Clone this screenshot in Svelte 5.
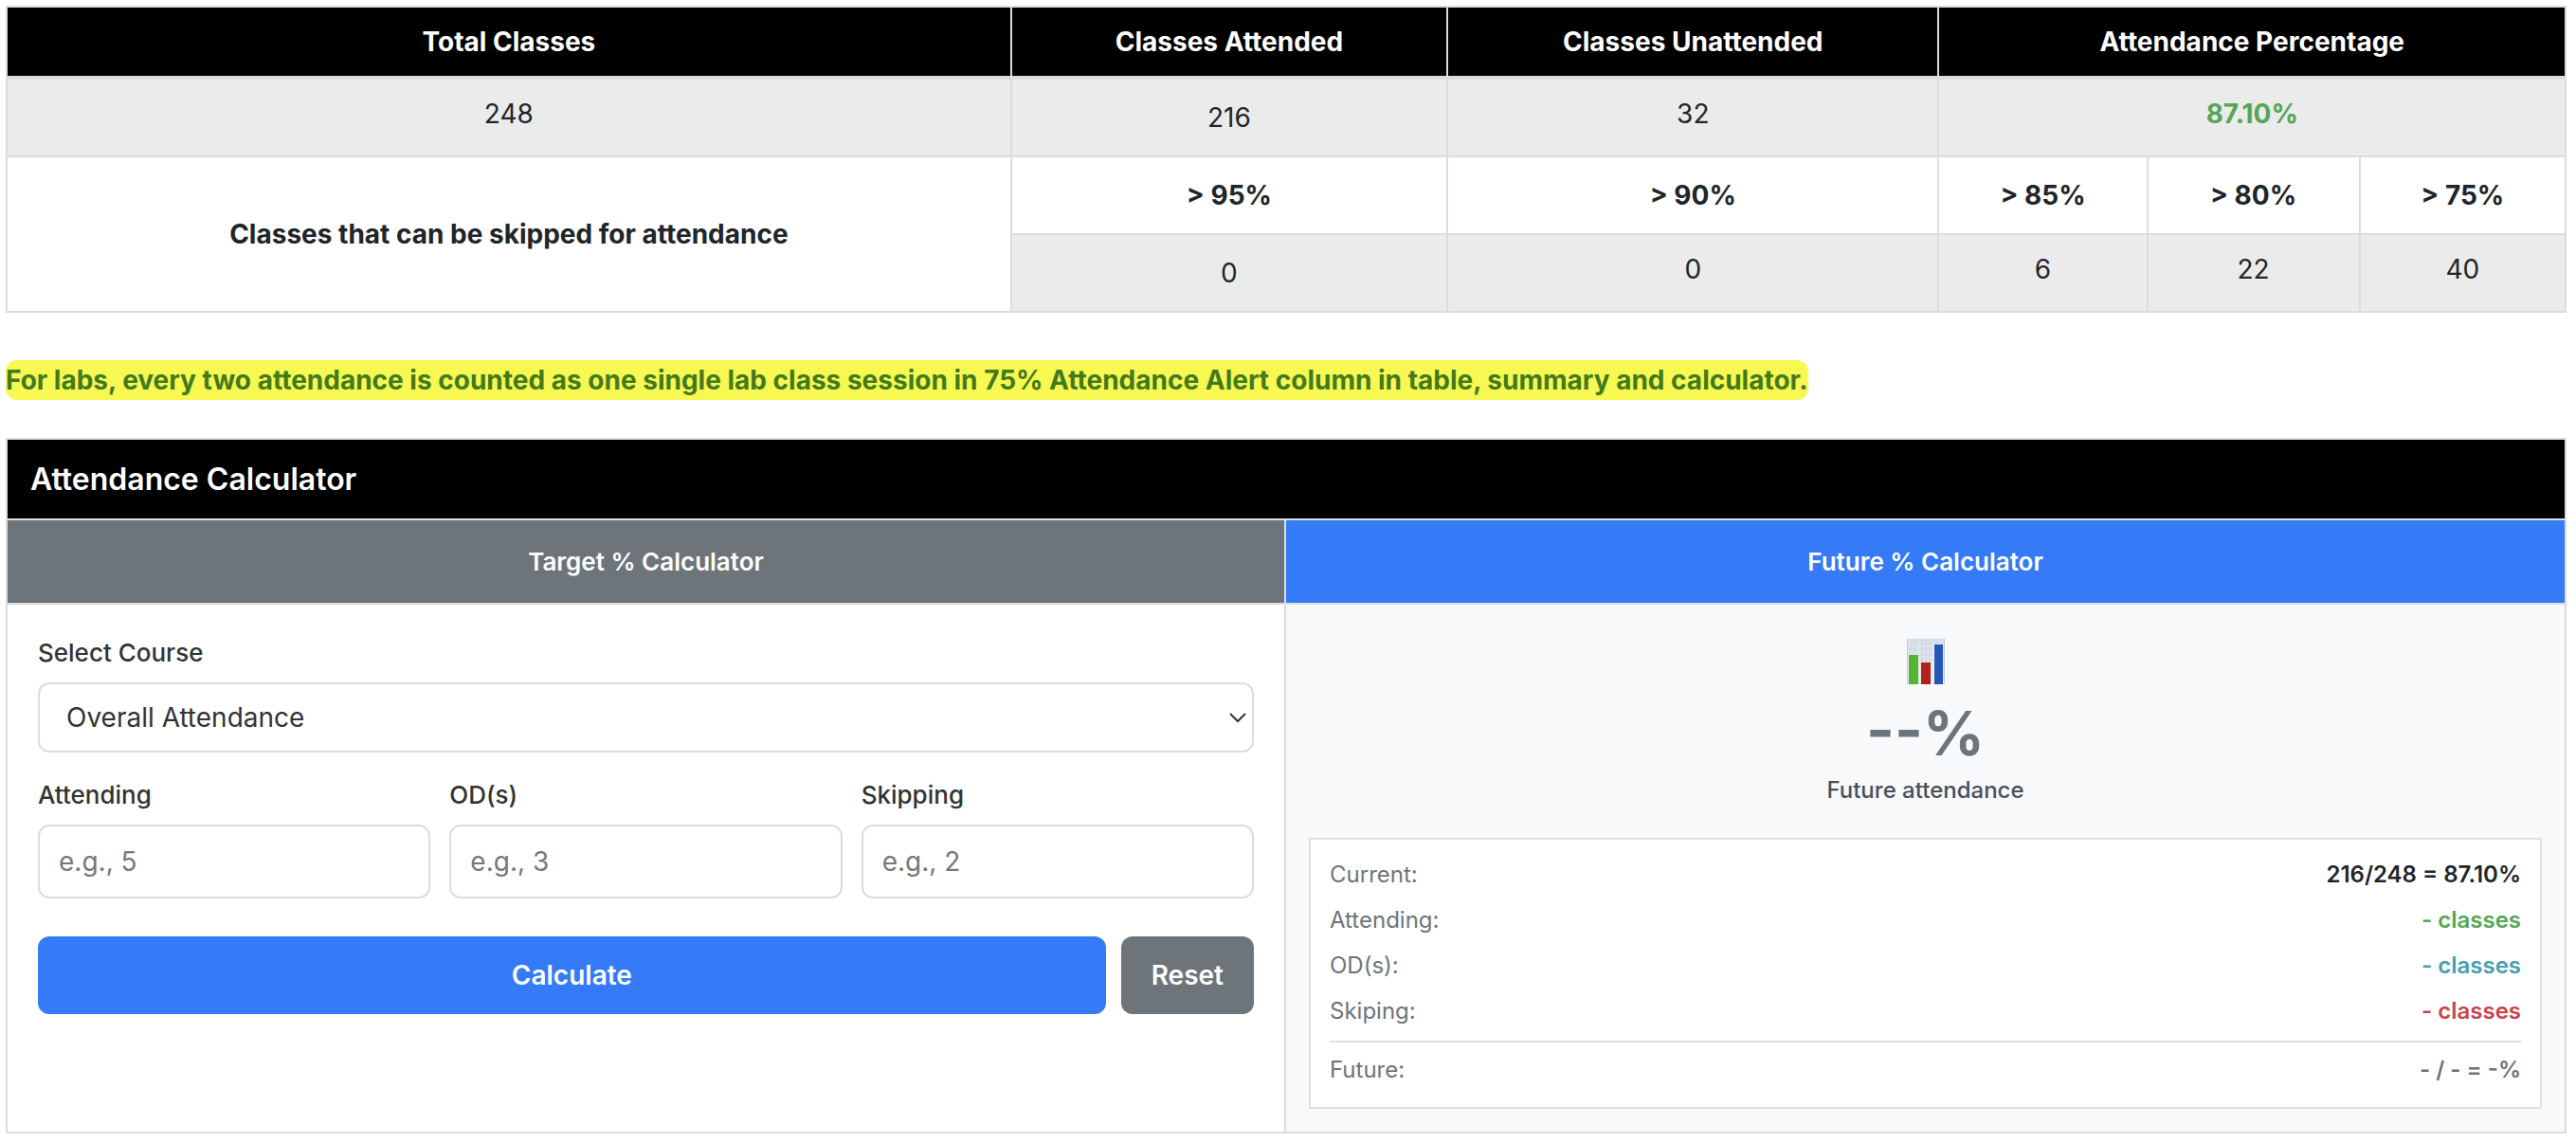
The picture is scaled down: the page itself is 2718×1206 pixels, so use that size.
<script>
  const skipLimits = ['> 95%', '> 90%', '> 85%', '> 80%', '> 75%'];
  const skipCounts = [0, 0, 6, 22, 40];
  const fields = [
    { id: 'attending', label: 'Attending', hint: 'e.g., 5' },
    { id: 'ods', label: 'OD(s)', hint: 'e.g., 3' },
    { id: 'skipping', label: 'Skipping', hint: 'e.g., 2' }
  ];
  const rows = [
    { name: 'Current:', value: '216/248 = 87.10%', tone: 'dark' },
    { name: 'Attending:', value: '- classes', tone: 'green' },
    { name: 'OD(s):', value: '- classes', tone: 'teal' },
    { name: 'Skiping:', value: '- classes', tone: 'red' },
    { name: 'Future:', value: '- / - = -%', tone: 'grey' }
  ];
  let values = $state({ attending: '', ods: '', skipping: '' });

  function reset() {
    values = { attending: '', ods: '', skipping: '' };
  }
</script>

<main>
  <table class="summary">
    <colgroup>
      <col class="c1" /><col class="c2" /><col class="c3" /><col class="c4" /><col class="c5" /><col class="c6" />
    </colgroup>
    <thead>
      <tr>
        <th>Total Classes</th>
        <th>Classes Attended</th>
        <th>Classes Unattended</th>
        <th colspan="3">Attendance Percentage</th>
      </tr>
    </thead>
    <tbody>
      <tr class="shade totals">
        <td>248</td>
        <td class="middle">216</td>
        <td>32</td>
        <td colspan="3" class="percent">87.10%</td>
      </tr>
      <tr>
        <th rowspan="2" scope="rowgroup">Classes that can be skipped for attendance</th>
        {#each skipLimits as limit}
          <th>{limit}</th>
        {/each}
      </tr>
      <tr class="shade">
        {#each skipCounts as count, i}
          <td class:middle={i === 0}>{count}</td>
        {/each}
      </tr>
    </tbody>
  </table>

  <p class="note"><mark>For labs, every two attendance is counted as one single lab class session in 75% Attendance Alert column in table, summary and calculator.</mark></p>

  <section class="calculator">
    <h2>Attendance Calculator</h2>
    <div class="halves tabs">
      <button type="button" class="tab">Target % Calculator</button>
      <button type="button" class="tab active">Future % Calculator</button>
    </div>
    <div class="halves">
      <form onsubmit={(e) => e.preventDefault()}>
        <label for="course">Select Course</label>
        <div class="select">
          <select id="course">
            <option>Overall Attendance</option>
          </select>
          <svg viewBox="0 0 20 12" aria-hidden="true"><path d="M2 2l8 8 8-8" /></svg>
        </div>
        <div class="fields">
          {#each fields as f}
            <div class="field">
              <label for={f.id}>{f.label}</label>
              <input id={f.id} type="text" inputmode="numeric" placeholder={f.hint} bind:value={values[f.id]} />
            </div>
          {/each}
        </div>
        <div class="actions">
          <button type="submit" class="calculate">Calculate</button>
          <button type="button" class="reset" onclick={reset}>Reset</button>
        </div>
      </form>

      <div class="result">
        <svg class="chart" viewBox="0 0 40 48" aria-hidden="true">
          <rect width="40" height="48" fill="#dfe5ee" />
          <path d="M0 1h40M0 5h40M0 11h40M0 17h40M0 23h40M5 0v48M9 0v48M16 0v48M20 0v48M24 0v48M31 0v48" stroke="#cdd4df" stroke-width="1" />
          <path d="M0 16h13v32H0zM13 24h14v24H13zM27 5h13v43H27z" fill="#e6eaf1" />
          <path d="M.5 0v48M39.5 0v48" stroke="#c4cad4" />
          <rect x="2" y="17" width="10" height="31" fill="#56b435" />
          <rect x="15" y="25" width="10" height="23" fill="#b02318" />
          <rect x="29" y="6" width="9" height="42" fill="#2459b8" />
        </svg>
        <strong class="big">--%</strong>
        <span class="caption">Future attendance</span>
        <dl>
          {#each rows as row}
            <div class="row">
              <dt>{row.name}</dt>
              <dd class={row.tone}>{row.value}</dd>
            </div>
          {/each}
        </dl>
      </div>
    </div>
  </section>
</main>

<style>
  :global(body) {
    margin: 0;
    background: #fff;
  }
  main {
    padding: 6px 10px 10px 6px;
    font-family: Inter, "Liberation Sans", sans-serif;
    font-size: 28px;
    line-height: 40px;
    color: #212529;
  }
  main :is(button, input, select) {
    font-family: inherit;
    margin: 0;
  }
  * {
    box-sizing: border-box;
  }

  .summary {
    width: 100%;
    table-layout: fixed;
    border-collapse: collapse;
    text-align: center;
  }
  .c1 { width: 39.25%; }
  .c2 { width: 17.05%; }
  .c3 { width: 19.2%; }
  .c4 { width: 8.15%; }
  .c5 { width: 8.3%; }
  .c6 { width: 8.05%; }
  .summary th,
  .summary td {
    height: 82px;
    padding: 16px;
    border: 2px solid #dcdcdc;
    font-weight: 400;
    vertical-align: top;
  }
  .summary th {
    padding: 0 16px;
    font-weight: 700;
    vertical-align: middle;
  }
  .summary thead th {
    height: 75px;
    background: #000;
    color: #fff;
    border-bottom-width: 4px;
  }
  .summary .totals td {
    height: 83px;
  }
  .shade td {
    background: #ebebeb;
  }
  .summary .middle {
    padding: 0 16px;
    vertical-align: middle;
  }
  .summary .percent {
    color: #56a655;
    font-weight: 700;
  }

  .note {
    margin: 50px 0 40px;
    line-height: 42px;
    font-weight: 700;
  }
  mark {
    display: inline-block;
    background: #f8f852;
    color: #427a1c;
    border-radius: 12px;
  }

  .calculator {
    border: 2px solid #dcdcdc;
  }
  h2 {
    margin: 0;
    padding: 22px 24px 21px;
    background: #000;
    color: #fff;
    font-size: 32px;
    font-weight: 600;
    line-height: 40px;
  }
  .halves {
    display: grid;
    grid-template-columns: 1fr 1fr;
  }
  .tabs {
    border: solid #dcdfe2;
    border-width: 2px 0;
  }
  .tab {
    height: 87px;
    border: 0;
    border-right: 2px solid #dcdfe2;
    background: #6d757a;
    color: #fff;
    font-size: 26px;
    font-weight: 600;
  }
  .tab.active {
    border-right: 0;
    background: #357af6;
  }

  form {
    padding: 32px;
    border-right: 2px solid #dcdcdc;
  }
  label {
    display: block;
    margin-bottom: 12px;
    color: #333;
    font-size: 26px;
    font-weight: 500;
    line-height: 38px;
  }
  .select {
    position: relative;
    margin-bottom: 26px;
  }
  select,
  input {
    display: block;
    width: 100%;
    border: 2px solid #dcdcdc;
    border-radius: 12px;
    background: #fff;
    color: #333;
    font-size: 28px;
  }
  select {
    height: 74px;
    padding: 0 60px 0 28px;
    appearance: none;
  }
  .select svg {
    position: absolute;
    right: 7px;
    top: 31px;
    width: 20px;
    height: 12px;
    fill: none;
    stroke: #333;
    stroke-width: 2;
    pointer-events: none;
  }
  .fields {
    display: grid;
    grid-template-columns: repeat(3, 1fr);
    gap: 20px;
  }
  input {
    height: 78px;
    padding: 0 20px;
  }
  input::placeholder {
    color: #777;
    opacity: 1;
  }
  .actions {
    display: flex;
    gap: 16px;
    margin-top: 40px;
  }
  .actions button {
    height: 82px;
    padding: 0 32px;
    border: 0;
    border-radius: 12px;
    color: #fff;
    font-size: 28px;
    font-weight: 600;
  }
  .actions .calculate {
    flex: 1;
    background: #357af6;
  }
  .actions .reset {
    background: #6d757a;
  }

  .result {
    display: flex;
    flex-direction: column;
    align-items: center;
    padding: 24px;
    background: #f8f9fb;
  }
  .chart {
    width: 40px;
    height: 48px;
    margin-top: 12px;
  }
  .big {
    margin-top: 16px;
    color: #6d757a;
    font-size: 64px;
    font-weight: 700;
    line-height: 72px;
  }
  .caption {
    margin: 6px 0 32px;
    color: #495057;
    font-size: 24px;
    font-weight: 500;
    line-height: 36px;
  }
  dl {
    align-self: stretch;
    display: grid;
    gap: 14px;
    margin: 0;
    padding: 20px 20px 22px;
    border: 2px solid #e0e0e0;
    background: #fff;
    font-size: 24px;
    line-height: 34px;
  }
  .row {
    display: flex;
    justify-content: space-between;
  }
  .row:last-child {
    padding-top: 12px;
    border-top: 2px solid #e0e0e0;
  }
  dt {
    color: #6d757a;
  }
  dd {
    margin: 0;
    font-weight: 600;
  }
  .dark { color: #212529; }
  .green { color: #56a655; }
  .teal { color: #4a9db0; }
  .red { color: #c9444f; }
  .grey { color: #6d757a; }
</style>
